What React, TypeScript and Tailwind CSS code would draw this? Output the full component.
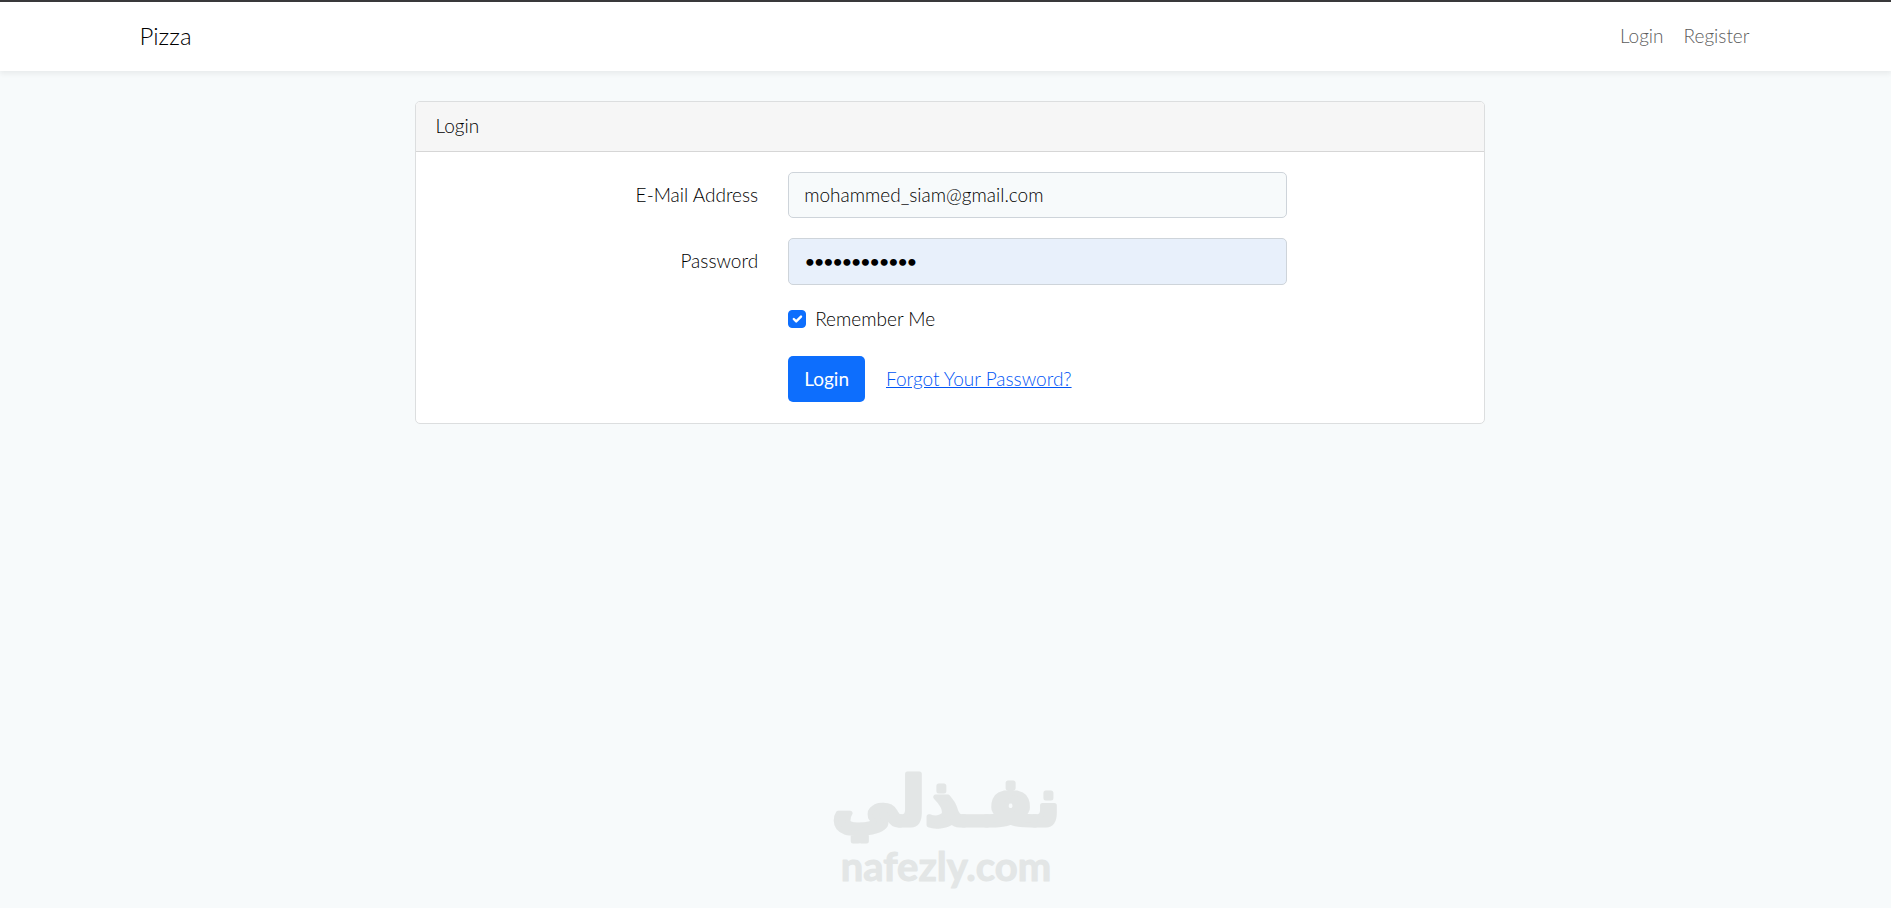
import type { ReactNode } from "react";

function Container({ children }: { children: ReactNode }) {
  return (
    <div className="pl-2">
      <div className="mx-auto w-full max-w-[1650px] px-[15px]">{children}</div>
    </div>
  );
}

function Navbar() {
  return (
    <nav className="border-t-2 border-[#39393b] bg-white shadow-[0_3px_5px_rgba(0,0,0,0.06)]">
      <Container>
        <div className="flex h-[69px] items-center justify-between pr-[10px] pb-[2px]">
          <a href="#home" className="text-[24px] leading-8 text-black">
            Pizza
          </a>
          <div className="flex gap-5 leading-7 text-[#5c5c5c]">
            <a href="#login">Login</a>
            <a href="#register">Register</a>
          </div>
        </div>
      </Container>
    </nav>
  );
}

function LoginCard() {
  return (
    <section className="rounded-[5px] border border-[#dcdedf] bg-white">
      <h1 className="rounded-t-[4px] border-b border-[#d6d6d6] bg-[#f6f6f6] px-5 pt-[9px] pb-[11px] leading-[29px] font-light">
        Login
      </h1>
      <form className="p-5" onSubmit={(e) => e.preventDefault()}>
        <div className="-mx-[15px] mb-5 grid grid-cols-12">
          <label htmlFor="email" className="col-span-4 self-center px-[15px] text-right">
            E-Mail Address
          </label>
          <div className="col-span-6 px-[15px]">
            <input
              id="email"
              type="email"
              defaultValue="mohammed_siam@gmail.com"
              className="block h-[46px] w-full rounded-[5px] border border-[#ced4da] bg-[#f7fafb] px-[15px] pb-[2px] font-light outline-none"
            />
          </div>
        </div>
        <div className="-mx-[15px] mb-5 grid grid-cols-12">
          <label htmlFor="password" className="col-span-4 self-center px-[15px] pb-[2px] text-right">
            Password
          </label>
          <div className="col-span-6 px-[15px]">
            <input
              id="password"
              type="password"
              defaultValue="passwordpass"
              className="block h-[47px] w-full rounded-[5px] border border-[#ced4da] bg-[#e8f0fb] px-4 pb-[2px] text-[16px] font-bold text-black outline-none"
            />
          </div>
        </div>
        <div className="-mx-[15px] mb-[23px] grid grid-cols-12">
          <div className="col-span-6 col-start-5 flex h-7 items-center px-[15px]">
            <span className="grid h-[18px] w-[18px] place-items-center">
              <input
                id="remember"
                type="checkbox"
                defaultChecked
                className="peer col-start-1 row-start-1 h-[18px] w-[18px] appearance-none rounded-[4px] border border-[#bfbfbf] checked:border-[#0d6efd] checked:bg-[#0d6efd]"
              />
              <svg
                viewBox="0 0 20 20"
                className="pointer-events-none invisible col-start-1 row-start-1 h-4 w-4 peer-checked:visible"
              >
                <path
                  d="M6 10l3 3l6-6"
                  fill="none"
                  stroke="#fff"
                  strokeWidth="3"
                  strokeLinecap="round"
                  strokeLinejoin="round"
                />
              </svg>
            </span>
            <label htmlFor="remember" className="pl-[9px]">
              Remember Me
            </label>
          </div>
        </div>
        <div className="-mx-[15px] grid grid-cols-12 pb-px">
          <div className="col-span-6 col-start-5 flex items-center gap-[21px] px-[15px]">
            <button type="submit" className="h-[46px] rounded-[5px] bg-[#0d6efd] px-4 font-normal text-white">
              Login
            </button>
            <a href="#forgot" className="text-[#0055f5] underline">
              Forgot Your Password?
            </a>
          </div>
        </div>
      </form>
    </section>
  );
}

function Watermark() {
  return (
    <footer className="flex justify-center pb-3">
      <svg
        viewBox="0 0 240 150"
        className="h-[150px] w-60 fill-[#e3e6e6] stroke-[#e3e6e6] font-bold"
        textAnchor="middle"
        strokeLinejoin="round"
      >
        <text x="120" y="79" lang="ar" direction="rtl" strokeWidth="5" className="font-['DejaVu_Sans',sans-serif] text-[67px]">
          نفـذلي
        </text>
        <text x="120" y="135" strokeWidth="1" className="font-['Lato',sans-serif] text-[40px]">
          nafezly.com
        </text>
      </svg>
    </footer>
  );
}

export default function App() {
  return (
    <div className="flex min-h-screen flex-col bg-[#f7fafb] font-['Lato',sans-serif] text-[19px] leading-7 font-light text-black">
      <Navbar />
      <main className="grow pt-[30px]">
        <Container>
          <div className="-mx-[15px] grid grid-cols-12">
            <div className="col-span-8 col-start-3 px-[15px]">
              <LoginCard />
            </div>
          </div>
        </Container>
      </main>
      <Watermark />
    </div>
  );
}
